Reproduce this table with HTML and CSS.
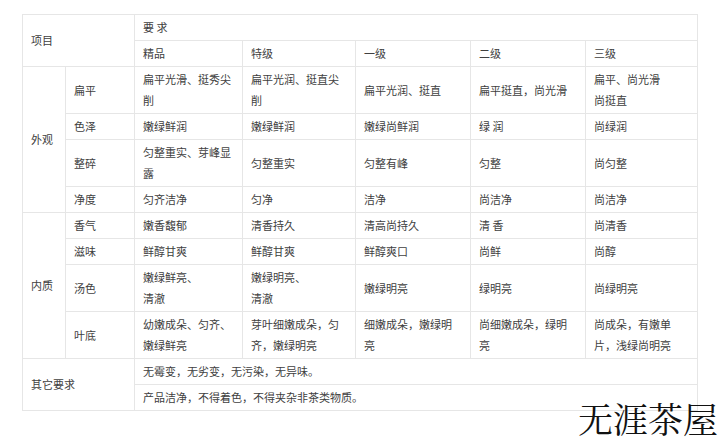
FILE: index.html
```html
<!DOCTYPE html>
<html lang="zh">
<head>
<meta charset="utf-8">
<title>茶叶等级要求</title>
<link rel="stylesheet" href="styles.css">
</head>
<body>
<div class="page">
  <table class="grade">
    <colgroup>
      <col class="c1"><col class="c2"><col class="c3"><col class="c4"><col class="c5"><col class="c6"><col class="c7">
    </colgroup>
    <tr>
      <td rowspan="2" colspan="2">项目</td>
      <td colspan="5">要 求</td>
    </tr>
    <tr>
      <td>精品</td><td>特级</td><td>一级</td><td>二级</td><td>三级</td>
    </tr>
    <tr class="dbl">
      <td rowspan="4">外观</td>
      <td>扁平</td>
      <td>扁平光滑、挺秀尖<br>削</td>
      <td>扁平光润、挺直尖<br>削</td>
      <td>扁平光润、挺直</td>
      <td>扁平挺直，尚光滑</td>
      <td>扁平、尚光滑<br>尚挺直</td>
    </tr>
    <tr>
      <td>色泽</td><td>嫩绿鲜润</td><td>嫩绿鲜润</td><td>嫩绿尚鲜润</td><td>绿 润</td><td>尚绿润</td>
    </tr>
    <tr class="dbl">
      <td>整碎</td><td>匀整重实、芽峰显<br>露</td><td>匀整重实</td><td>匀整有峰</td><td>匀整</td><td>尚匀整</td>
    </tr>
    <tr>
      <td>净度</td><td>匀齐洁净</td><td>匀净</td><td>洁净</td><td>尚洁净</td><td>尚洁净</td>
    </tr>
    <tr>
      <td rowspan="4">内质</td>
      <td>香气</td><td>嫩香馥郁</td><td>清香持久</td><td>清高尚持久</td><td>清 香</td><td>尚清香</td>
    </tr>
    <tr>
      <td>滋味</td><td>鲜醇甘爽</td><td>鲜醇甘爽</td><td>鲜醇爽口</td><td>尚鲜</td><td>尚醇</td>
    </tr>
    <tr class="dbl">
      <td>汤色</td><td>嫩绿鲜亮、<br>清澈</td><td>嫩绿明亮、<br>清澈</td><td>嫩绿明亮</td><td>绿明亮</td><td>尚绿明亮</td>
    </tr>
    <tr class="dbl">
      <td>叶底</td><td>幼嫩成朵、匀齐、<br>嫩绿鲜亮</td><td>芽叶细嫩成朵，匀<br>齐，嫩绿明亮</td><td>细嫩成朵，嫩绿明<br>亮</td><td>尚细嫩成朵，绿明<br>亮</td><td>尚成朵，有嫩单<br>片，浅绿尚明亮</td>
    </tr>
    <tr>
      <td rowspan="2" colspan="2">其它要求</td>
      <td colspan="5">无霉变，无劣变，无污染，无异味。</td>
    </tr>
    <tr>
      <td colspan="5">产品洁净，不得着色，不得夹杂非茶类物质。</td>
    </tr>
  </table>
  <div class="mark">无涯茶屋</div>
</div>
</body>
</html>
```

FILE: styles.css
```css
html, body {
  margin: 0;
  padding: 0;
  background: #ffffff;
}
.page {
  position: relative;
  width: 720px;
  height: 437px;
  overflow: hidden;
  padding: 14px 0 0 22px;
  box-sizing: border-box;
}
.grade {
  border-collapse: collapse;
  table-layout: fixed;
  width: 675px;
  font-family: "Noto Sans CJK SC", "Noto Sans", sans-serif;
  font-size: 11px;
  color: #404040;
}
.c1 { width: 43px; }
.c2 { width: 69px; }
.c3 { width: 108px; }
.c4 { width: 113px; }
.c5 { width: 115px; }
.c6 { width: 115px; }
.c7 { width: 112px; }
.grade td {
  border: 1px solid #e6e6e6;
  padding: 2px 6px 2px 8px;
  line-height: 21px;
  height: 21px;
  vertical-align: middle;
  text-align: left;
  white-space: nowrap;
}
.grade tr.dbl td {
  height: 42px;
}
.mark {
  position: absolute;
  left: 578px;
  top: 400px;
  font-family: "Noto Serif CJK SC", "Liberation Serif", serif;
  font-size: 35px;
  line-height: 36px;
  color: #111111;
  white-space: nowrap;
}
```
